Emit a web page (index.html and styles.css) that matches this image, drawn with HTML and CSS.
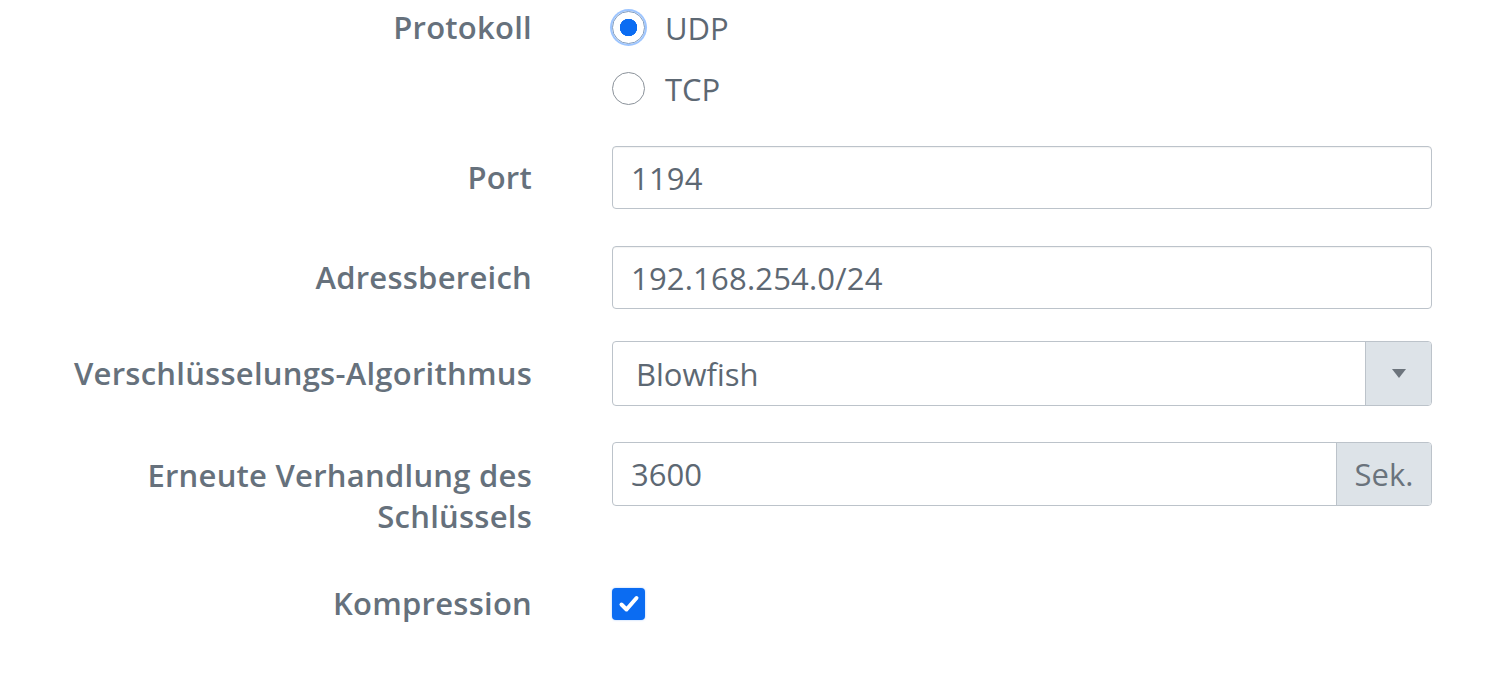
FILE: index.html
```html
<!DOCTYPE html>
<html lang="de">
<head>
<meta charset="utf-8">
<title>OpenVPN</title>
<link rel="stylesheet" href="styles.css">
</head>
<body>
<div class="form">
  <div class="row row-proto">
    <div class="label label-proto">Protokoll</div>
    <div class="control">
      <div class="opt"><span class="radio checked"></span><span class="opt-text">UDP</span></div>
      <div class="opt"><span class="radio"></span><span class="opt-text">TCP</span></div>
    </div>
  </div>
  <div class="row row-port">
    <div class="label label-field">Port</div>
    <div class="control"><div class="input"><span>1194</span></div></div>
  </div>
  <div class="row row-addr">
    <div class="label label-field">Adressbereich</div>
    <div class="control"><div class="input"><span>192.168.254.0/24</span></div></div>
  </div>
  <div class="row row-algo">
    <div class="label label-select">Verschlüsselungs-Algorithmus</div>
    <div class="control">
      <div class="select">
        <span class="select-text">Blowfish</span>
        <span class="select-arrow"><span class="tri"></span></span>
      </div>
    </div>
  </div>
  <div class="row row-reneg">
    <div class="label label-two">Erneute Verhandlung des<br>Schlüssels</div>
    <div class="control">
      <div class="group">
        <div class="group-input"><span>3600</span></div>
        <div class="addon">Sek.</div>
      </div>
    </div>
  </div>
  <div class="row row-comp">
    <div class="label">Kompression</div>
    <div class="control control-check">
      <span class="checkbox">
        <svg viewBox="0 0 32 32" width="32" height="32"><path d="M8.5 16.5 L13.5 21.5 L23.5 10" fill="none" stroke="#fff" stroke-width="4" stroke-linecap="round" stroke-linejoin="round"/></svg>
      </span>
    </div>
  </div>
</div>
</body>
</html>
```

FILE: styles.css
```css
html, body {
  margin: 0;
  padding: 0;
  background: #ffffff;
}
body {
  font-family: "Open Sans", "Noto Sans", sans-serif;
  color: #5d6873;
}
.form {
  margin-top: -3px;
}
.row {
  display: flex;
  align-items: flex-start;
  column-gap: 80px;
}
.label {
  width: 532px;
  flex: none;
  text-align: right;
  font-weight: 600;
  font-size: 31px;
  line-height: 41px;
  letter-spacing: 0.25px;
  color: #66717c;
}
.control {
  width: 820px;
  flex: none;
}
.label-proto { padding-top: 10px; }
.opt {
  height: 61px;
  display: flex;
  align-items: center;
}
.opt-text {
  margin-left: 20px;
  font-size: 31px;
  color: #5d6873;
}
.radio {
  width: 33px;
  height: 33px;
  box-sizing: border-box;
  border: 1.5px solid #8b929a;
  border-radius: 50%;
  background: #fff;
  flex: none;
}
.radio.checked {
  border-color: #7e9bc0;
  background: radial-gradient(circle, #0b6cf2 0 8.5px, #ffffff 9px);
  box-shadow: 0 0 0 2px rgba(60, 140, 255, 0.5);
}
.row-port { margin-top: 27px; }
.row-addr { margin-top: 37px; }
.row-algo { margin-top: 32px; }
.row-reneg { margin-top: 36px; }
.row-comp { margin-top: 46px; }
.label-field { padding-top: 11px; }
.label-select { padding-top: 12px; }
.label-two { padding-top: 13px; }
.input {
  height: 63px;
  box-sizing: border-box;
  border: 1.5px solid #bcc3ca;
  border-radius: 4px;
  padding-left: 18px;
  display: flex;
  align-items: center;
  font-size: 31px;
  letter-spacing: 0.2px;
  color: #5d6873;
  box-shadow: inset 0 1px 1px rgba(0, 0, 0, 0.05);
}
.select {
  height: 65px;
  box-sizing: border-box;
  border: 1.5px solid #bcc3ca;
  border-radius: 4px;
  display: flex;
  align-items: stretch;
  font-size: 31px;
  color: #5d6873;
}
.select-text {
  flex: 1;
  display: flex;
  align-items: center;
  padding-left: 23px;
}
.select-arrow {
  width: 65px;
  background: #dde3e8;
  border-left: 1.5px solid #bcc3ca;
  border-radius: 0 3px 3px 0;
  display: flex;
  align-items: center;
  justify-content: center;
}
.tri {
  width: 0;
  height: 0;
  border-left: 7px solid transparent;
  border-right: 7px solid transparent;
  border-top: 9px solid #6c747c;
}
.group {
  height: 64px;
  box-sizing: border-box;
  border: 1.5px solid #bcc3ca;
  border-radius: 4px;
  display: flex;
  align-items: stretch;
  font-size: 31px;
  color: #5d6873;
}
.group-input {
  flex: 1;
  display: flex;
  align-items: center;
  padding-left: 18px;
}
.addon {
  width: 94px;
  background: #dde3e8;
  border-left: 1.5px solid #bcc3ca;
  border-radius: 0 3px 3px 0;
  display: flex;
  align-items: center;
  justify-content: center;
  color: #6a737c;
}
.control-check {
  height: 41px;
  display: flex;
  align-items: center;
}
.checkbox {
  width: 33px;
  height: 32px;
  border-radius: 4px;
  background: #0b6cf2;
  display: flex;
  align-items: center;
  justify-content: center;
  box-shadow: 0 0 2px rgba(60, 140, 255, 0.5);
}
.checkbox svg { display: block; }
```
